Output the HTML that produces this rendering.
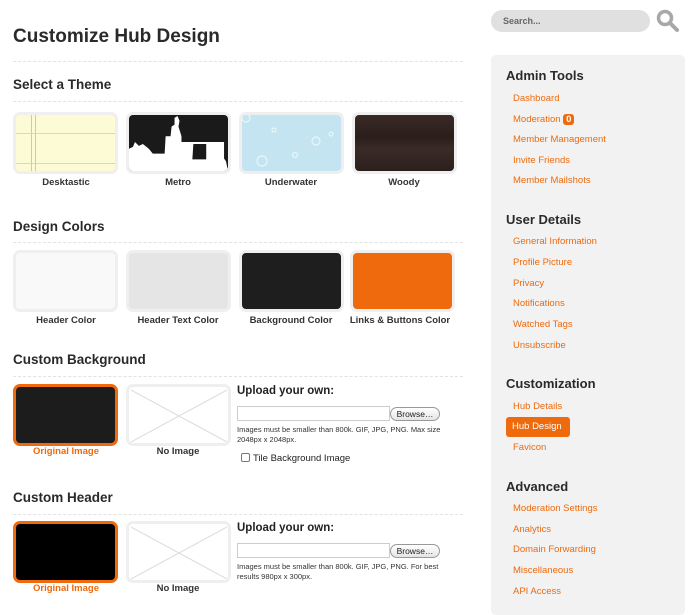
<!DOCTYPE html>
<html><head><meta charset="utf-8"><style>
*{margin:0;padding:0;box-sizing:border-box}
body{width:700px;height:605px;background:#fff;font-family:"Liberation Sans",Arial,sans-serif;position:relative;overflow:hidden;color:#222}
.a{position:absolute}
.h1{font-size:19px;font-weight:bold;color:#2a2a2a}
.h2{font-size:13.5px;font-weight:bold;color:#2a2a2a}
.dash{position:absolute;left:13px;width:450px;border-top:1px dashed #e2e2e2}
.tile{position:absolute;width:105px;height:62px;border:3px solid #efefef;border-radius:7px;overflow:hidden}
.lbl{position:absolute;width:120px;text-align:center;font-size:9.5px;font-weight:bold;color:#333}
.sel{border-color:#ee6a0d}
.ol{color:#ee6a0d}
.noimg{background:#fff}
.up{font-size:11.5px;font-weight:bold;color:#222}
.inp{position:absolute;left:237px;width:153px;height:15px;border:1px solid #ccc;background:#fff}
.br{position:absolute;left:390px;width:50px;height:14px;border:1px solid #999;border-radius:8px;background:linear-gradient(#fff,#e4e4e4);font-size:8.5px;text-align:center;line-height:12px;color:#222}
.sm{font-size:7.5px;color:#333;line-height:10px;width:215px}
.side{position:absolute;left:491px;top:55px;width:194px;height:560px;background:#f2f2f2;border-radius:5px}
.sh{position:absolute;left:506px;font-size:13px;font-weight:bold;color:#2a2a2a}
.lk{position:absolute;left:513px;font-size:9.5px;color:#ee6a0d}
</style></head><body>
<div class="a h1" style="left:13px;top:26px">Customize Hub Design</div>
<div class="dash" style="top:61px"></div>
<div class="a h2" style="left:13px;top:77px">Select a Theme</div>
<div class="dash" style="top:101px"></div>

<div class="tile" style="left:13px;top:112px;background:#fdfbd6">
<div class="a" style="left:15px;top:0;width:1px;height:60px;background:#efb8a8"></div>
<div class="a" style="left:19px;top:0;width:1px;height:60px;background:#efb8a8"></div>
<div class="a" style="left:0;top:18px;width:100px;height:1px;background:#bde0dc"></div>
<div class="a" style="left:0;top:48px;width:100px;height:1px;background:#bde0dc"></div>
</div>
<div class="tile" style="left:126px;top:112px;background:#1a1a1a">
<svg class="a" style="left:0;top:0" width="99" height="56" viewBox="0 0 100 58" preserveAspectRatio="none"><path d="M0 58 L0 35 L4 33 L6 28 L10 32 L14 30 L20 35 L24 40 L36 40 L37 22 L42 22 L43 12 L46 10 L46 3 L49 1 L51 6 L50 12 L53 22 L53 28 L96 28 L96 45 L98 48 L100 58 Z" fill="#fff"/><path d="M65 30 L78 30 L78 46 L64 46 Z" fill="#1a1a1a"/></svg>
</div>
<div class="tile" style="left:239px;top:112px;background:#c3e4f0">
<svg class="a" width="100" height="58"><g fill="none" stroke="#e8f6fb" stroke-width="1.2"><circle cx="20" cy="46" r="5"/><circle cx="74" cy="26" r="4"/><circle cx="32" cy="15" r="2"/><circle cx="53" cy="40" r="2.5"/><circle cx="89" cy="19" r="2"/><circle cx="4" cy="3" r="4"/></g></svg>
</div>
<div class="tile" style="left:352px;top:112px;background:linear-gradient(#3a2a26,#2a1e1b 40%,#3b2b27 60%,#2b1f1c)"></div>
<div class="lbl" style="left:6px;top:177px">Desktastic</div>
<div class="lbl" style="left:118px;top:177px">Metro</div>
<div class="lbl" style="left:231px;top:177px">Underwater</div>
<div class="lbl" style="left:344px;top:177px">Woody</div>

<div class="a h2" style="left:13px;top:219px">Design Colors</div>
<div class="dash" style="top:242px"></div>
<div class="tile" style="left:13px;top:250px;background:#f9f9f9"></div>
<div class="tile" style="left:126px;top:250px;background:#e5e5e5"></div>
<div class="tile" style="left:239px;top:250px;background:#1e1e1e"></div>
<div class="tile" style="left:350px;top:250px;background:#ee6a0d"></div>
<div class="lbl" style="left:6px;top:315px">Header Color</div>
<div class="lbl" style="left:118px;top:315px">Header Text Color</div>
<div class="lbl" style="left:231px;top:315px">Background Color</div>
<div class="lbl" style="left:340px;top:315px;width:120px">Links &amp; Buttons Color</div>

<div class="a h2" style="left:13px;top:352px">Custom Background</div>
<div class="dash" style="top:376px"></div>
<div class="tile sel" style="left:13px;top:384px;background:#1c1c1c"></div>
<div class="tile noimg" style="left:126px;top:384px"><svg class="a" width="100" height="58"><path d="M2 3 L98 55 M98 3 L2 55" stroke="#ddd" stroke-width="1"/></svg></div>
<div class="lbl ol" style="left:6px;top:446px">Original Image</div>
<div class="lbl" style="left:118px;top:446px">No Image</div>
<div class="a up" style="left:237px;top:385px">Upload your own:</div>
<div class="inp" style="top:406px"></div>
<div class="br" style="top:407px">Browse…</div>
<div class="a sm" style="left:237px;top:425px">Images must be smaller than 800k. GIF, JPG, PNG. Max size 2048px x 2048px.</div>
<div class="a" style="left:241px;top:453px;width:9px;height:9px;border:1px solid #777;border-radius:2px;background:#fff"></div>
<div class="a" style="left:253px;top:453px;font-size:9.5px;color:#222">Tile Background Image</div>

<div class="a h2" style="left:13px;top:490px">Custom Header</div>
<div class="dash" style="top:514px"></div>
<div class="tile sel" style="left:13px;top:521px;background:#000"></div>
<div class="tile noimg" style="left:126px;top:521px"><svg class="a" width="100" height="58"><path d="M2 3 L98 55 M98 3 L2 55" stroke="#ddd" stroke-width="1"/></svg></div>
<div class="lbl ol" style="left:6px;top:583px">Original Image</div>
<div class="lbl" style="left:118px;top:583px">No Image</div>
<div class="a up" style="left:237px;top:522px">Upload your own:</div>
<div class="inp" style="top:543px"></div>
<div class="br" style="top:544px">Browse…</div>
<div class="a sm" style="left:237px;top:562px">Images must be smaller than 800k. GIF, JPG, PNG. For best results 980px x 300px.</div>

<div class="a" style="left:491px;top:10px;width:159px;height:22px;border-radius:11px;background:#e0e0e0;font-size:9px;font-weight:bold;color:#666;padding:6px 0 0 12px">Search...</div>
<svg class="a" style="left:654px;top:7px" width="28" height="28"><circle cx="11" cy="11" r="6.5" fill="none" stroke="#a8a8a8" stroke-width="3.5"/><path d="M16 16 L23 23" stroke="#a8a8a8" stroke-width="4" stroke-linecap="round"/></svg>

<div class="side"></div>
<div class="sh" style="top:68px">Admin Tools</div>
<div class="lk" style="top:93px">Dashboard</div>
<div class="lk" style="top:114px">Moderation <span style="display:inline-block;background:#ee6a0d;color:#fff;font-weight:bold;border-radius:3px;padding:0 3px;line-height:11px">0</span></div>
<div class="lk" style="top:134px">Member Management</div>
<div class="lk" style="top:155px">Invite Friends</div>
<div class="lk" style="top:175px">Member Mailshots</div>
<div class="sh" style="top:212px">User Details</div>
<div class="lk" style="top:236px">General Information</div>
<div class="lk" style="top:257px">Profile Picture</div>
<div class="lk" style="top:278px">Privacy</div>
<div class="lk" style="top:298px">Notifications</div>
<div class="lk" style="top:319px">Watched Tags</div>
<div class="lk" style="top:340px">Unsubscribe</div>
<div class="sh" style="top:376px">Customization</div>
<div class="lk" style="top:401px">Hub Details</div>
<div class="a" style="left:506px;top:417px;width:64px;height:20px;border-radius:3px;background:#ee6a0d"></div>
<div class="lk" style="top:421px;color:#fff;left:512px">Hub Design</div>
<div class="lk" style="top:442px">Favicon</div>
<div class="sh" style="top:479px">Advanced</div>
<div class="lk" style="top:503px">Moderation Settings</div>
<div class="lk" style="top:524px">Analytics</div>
<div class="lk" style="top:544px">Domain Forwarding</div>
<div class="lk" style="top:565px">Miscellaneous</div>
<div class="lk" style="top:586px">API Access</div>
</body></html>
